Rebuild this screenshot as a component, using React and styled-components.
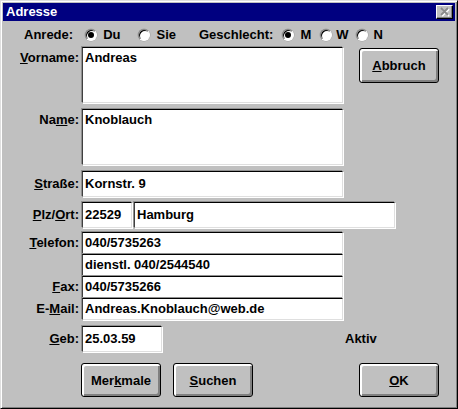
import { createGlobalStyle, styled } from "styled-components";

const GlobalStyle = createGlobalStyle`
  html, body {
    margin: 0;
    padding: 0;
    background: #c0c0c0;
  }
  * {
    box-sizing: border-box;
  }
`;

function Radio({ checked }) {
  return <RadioCircle>{checked && <RadioDot />}</RadioCircle>;
}

function App() {
  return (
    <>
      <GlobalStyle />
      <Window>
        <TitleBar>
          <Title>Adresse</Title>
          <CloseBox>
            <svg width="12" height="10" viewBox="0 0 12 10">
              <path d="M2 1 L9 8 M9 1 L2 8" stroke="#ffffff" strokeWidth="1.8" transform="translate(1 1)" />
              <path d="M2 1 L9 8 M9 1 L2 8" stroke="#8a8a8a" strokeWidth="1.8" />
            </svg>
          </CloseBox>
        </TitleBar>

        <Body>
          <RadioRow>
            <Caption>Anrede:</Caption>
            <Option $ml={12}>
              <Radio checked />
              <OptionText>Du</OptionText>
            </Option>
            <Option $ml={18}>
              <Radio />
              <OptionText>Sie</OptionText>
            </Option>
            <Caption $ml={23}>Geschlecht:</Caption>
            <Option $ml={9}>
              <Radio checked />
              <OptionText>M</OptionText>
            </Option>
            <Option $ml={9}>
              <Radio />
              <OptionText $gap={4}>W</OptionText>
            </Option>
            <Option $ml={7}>
              <Radio />
              <OptionText>N</OptionText>
            </Option>
          </RadioRow>

          <Row>
            <Label $multi>
              <U>V</U>orname:
            </Label>
            <Field $w={261} $h={56} $multi>
              Andreas
            </Field>
            <Button $ml={16} $mt={1} $h={35}>
              <U>A</U>bbruch
            </Button>
          </Row>

          <Row $mt={6}>
            <Label $multi>
              Na<U>m</U>e:
            </Label>
            <Field $w={261} $h={56} $multi>
              Knoblauch
            </Field>
          </Row>

          <Row $mt={6}>
            <Label $h={26}>
              <U>S</U>traße:
            </Label>
            <Field $w={261} $h={26}>
              Kornstr. 9
            </Field>
          </Row>

          <Row $mt={5}>
            <Label $h={26}>
              <U>P</U>lz/<U>O</U>rt:
            </Label>
            <Field $w={50} $h={26}>
              22529
            </Field>
            <Field $w={261} $h={26} $ml={2}>
              Hamburg
            </Field>
          </Row>

          <Row $mt={4}>
            <Label $h={22}>
              <U>T</U>elefon:
            </Label>
            <Field $w={261} $h={22}>
              040/5735263
            </Field>
          </Row>
          <Row>
            <Label $h={22} />
            <Field $w={261} $h={22}>
              dienstl. 040/2544540
            </Field>
          </Row>
          <Row>
            <Label $h={22}>
              <U>F</U>ax:
            </Label>
            <Field $w={261} $h={22}>
              040/5735266
            </Field>
          </Row>
          <Row>
            <Label $h={22}>
              E-<U>M</U>ail:
            </Label>
            <Field $w={261} $h={22}>
              Andreas.Knoblauch@web.de
            </Field>
          </Row>

          <Row $mt={6}>
            <Label $h={26}>
              <U>G</U>eb:
            </Label>
            <FieldSlot>
              <Field $w={80} $h={26}>
                25.03.59
              </Field>
            </FieldSlot>
            <Status>Aktiv</Status>
          </Row>

          <ButtonBar>
            <Button>
              Mer<U>k</U>male
            </Button>
            <Button $ml={12}>
              <U>S</U>uchen
            </Button>
            <Button $push>
              <U>O</U>K
            </Button>
          </ButtonBar>
        </Body>
      </Window>
    </>
  );
}

export default App;

const Window = styled.div`
  width: 458px;
  height: 409px;
  display: flex;
  flex-direction: column;
  padding: 2px;
  background: #c0c0c0;
  border: 1px solid;
  border-color: #dfdfdf #000000 #000000 #dfdfdf;
  box-shadow: inset 1px 1px 0 #ffffff, inset -1px -1px 0 #808080;
  font-family: "Liberation Sans", Arial, sans-serif;
  font-size: 13px;
  font-weight: 700;
  color: #000000;
`;

const TitleBar = styled.div`
  display: flex;
  align-items: center;
  justify-content: space-between;
  height: 18px;
  padding: 0 2px 0 3px;
  background: #000080;
`;

const Title = styled.span`
  color: #ffffff;
  font-size: 13px;
  font-weight: 700;
  line-height: 18px;
`;

const CloseBox = styled.div`
  display: flex;
  align-items: center;
  justify-content: center;
  width: 17px;
  height: 14px;
  background: #c0c0c0;
  border: 1px solid;
  border-color: #ffffff #000000 #000000 #ffffff;
  box-shadow: inset -1px -1px 0 #808080;
`;

const Body = styled.div`
  display: flex;
  flex-direction: column;
  flex: 1;
`;

const RadioRow = styled.div`
  display: flex;
  align-items: center;
  height: 26px;
  padding: 1px 0 0 21px;
`;

const Caption = styled.span`
  margin-left: ${(p) => p.$ml || 0}px;
  line-height: 16px;
`;

const Option = styled.label`
  display: flex;
  align-items: center;
  margin-left: ${(p) => p.$ml || 0}px;
`;

const OptionText = styled.span`
  margin-left: ${(p) => p.$gap || 6}px;
  line-height: 16px;
`;

const RadioCircle = styled.span`
  position: relative;
  display: inline-block;
  width: 12px;
  height: 12px;
  border-radius: 50%;
  background: #ffffff;
  border: 1px solid;
  border-color: #808080 #ffffff #ffffff #808080;
  box-shadow: inset 1px 1px 0 #000000, 0 0 0 0.5px #a0a0a0;
`;

const RadioDot = styled.span`
  position: absolute;
  left: 2px;
  top: 2px;
  width: 6px;
  height: 6px;
  border-radius: 50%;
  background: #000000;
`;

const Row = styled.div`
  display: flex;
  align-items: flex-start;
  margin-top: ${(p) => p.$mt || 0}px;
`;

const Label = styled.div`
  width: 79px;
  flex-shrink: 0;
  padding-right: 3px;
  text-align: right;
  white-space: nowrap;
  height: ${(p) => (p.$multi ? "auto" : `${p.$h}px`)};
  padding-top: ${(p) => (p.$multi ? 3 : 0)}px;
  line-height: ${(p) => (p.$multi ? "16px" : `${p.$h}px`)};
`;

const U = styled.span`
  text-decoration: underline;
  text-underline-offset: 1px;
`;

const Field = styled.div`
  width: ${(p) => p.$w}px;
  height: ${(p) => p.$h}px;
  flex-shrink: 0;
  margin-left: ${(p) => p.$ml || 0}px;
  padding: ${(p) => (p.$multi ? "2px 2px 0" : "0 2px")};
  background: #ffffff;
  border: 1px solid;
  border-color: #000000 #dfdfdf #dfdfdf #404040;
  box-shadow: 1px 1px 0 #ffffff, -1px -1px 0 #909090;
  line-height: ${(p) => (p.$multi ? "16px" : `${p.$h - 2}px`)};
  white-space: nowrap;
  overflow: hidden;
`;

const FieldSlot = styled.div`
  width: 261px;
  flex-shrink: 0;
`;

const Status = styled.span`
  padding-left: 2px;
  line-height: 26px;
`;

const ButtonBar = styled.div`
  display: flex;
  margin-top: 11px;
  padding: 0 16px 0 78px;
`;

const Button = styled.button`
  width: 80px;
  height: ${(p) => p.$h || 34}px;
  flex-shrink: 0;
  margin-left: ${(p) => (p.$push ? "auto" : `${p.$ml || 0}px`)};
  margin-top: ${(p) => p.$mt || 0}px;
  padding: 0;
  background: #c0c0c0;
  border: 1px solid #000000;
  border-radius: 3px;
  box-shadow: inset 2px 2px 0 #ffffff, inset -2px -2px 0 #808080;
  font-family: "Liberation Sans", Arial, sans-serif;
  font-size: 13px;
  font-weight: 700;
  color: #000000;
`;
